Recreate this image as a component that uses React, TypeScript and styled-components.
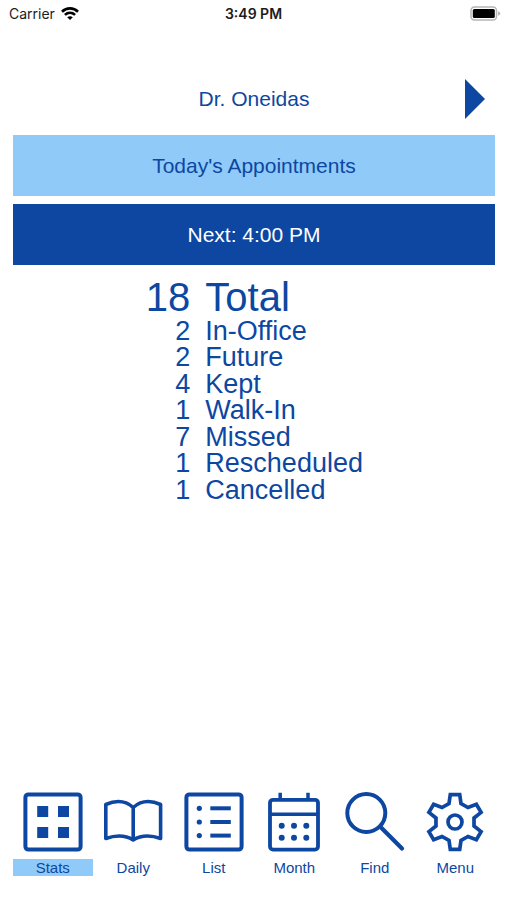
import React from "react";
import styled, { createGlobalStyle } from "styled-components";

const navy = "#0d47a1";
const sky = "#90caf9";

const GlobalStyle = createGlobalStyle`
  *, *::before, *::after { box-sizing: border-box; }
  body {
    margin: 0;
    background: #fff;
    color: ${navy};
    font-family: "Liberation Sans", Helvetica, Arial, sans-serif;
  }
`;

const Screen = styled.div`
  display: flex;
  flex-direction: column;
  min-height: 100vh;
`;

const StatusBar = styled.header`
  display: grid;
  grid-template-columns: 1fr auto 1fr;
  align-items: center;
  height: 27px;
  padding: 0 6px;
  color: #1c1c1c;
  font: 14px/20px Inter, sans-serif;
`;

const Carrier = styled.div`
  display: flex;
  align-items: center;
  gap: 6px;
  padding-left: 3px;
`;

const Clock = styled.time`
  font-weight: 600;
`;

const Battery = styled.div`
  display: flex;
  justify-content: flex-end;
`;

const Main = styled.main`
  display: flex;
  flex: 1;
  flex-direction: column;
  padding: 36px 12px 0 13px;
`;

const DoctorRow = styled.div`
  display: grid;
  grid-template-columns: 1fr auto 1fr;
  align-items: center;
  height: 72px;
  padding: 0 10px;
`;

const DoctorName = styled.h1`
  grid-column: 2;
  margin: 0;
  font-size: 21px;
  font-weight: 400;
  line-height: 26px;
`;

const NextButton = styled.button`
  display: flex;
  justify-self: end;
  padding: 0;
  border: 0;
  background: none;
  color: ${navy};
  cursor: pointer;
`;

const Panels = styled.div`
  display: grid;
  gap: 8px;
`;

const PanelButton = styled.button<{ $dark?: boolean }>`
  height: 61px;
  padding: 0 16px;
  border: 0;
  background: ${(p) => (p.$dark ? navy : sky)};
  color: ${(p) => (p.$dark ? "#fff" : navy)};
  font: inherit;
  font-size: 21px;
  line-height: 24px;
  cursor: pointer;
`;

const Summary = styled.table`
  width: 100%;
  margin-top: 12px;
  border-collapse: collapse;
  table-layout: fixed;
  font-size: 27px;
  line-height: 26px;
`;

const SummaryRow = styled.tr<{ $total?: boolean }>`
  font-size: ${(p) => (p.$total ? "40px" : "inherit")};
  line-height: ${(p) => (p.$total ? "40px" : "inherit")};
  &:nth-child(odd) > * { padding-bottom: 1px; }
`;

const Count = styled.td`
  width: 37%;
  padding: 0 1px 0 0;
  text-align: right;
`;

const Label = styled.th`
  padding: 0 0 0 14px;
  font-weight: 400;
  text-align: left;
`;

const TabBar = styled.nav`
  display: grid;
  grid-template-columns: repeat(6, 1fr);
  gap: 1px;
  padding: 0 12px 24px 13px;
`;

const Tab = styled.a`
  display: flex;
  flex-direction: column;
  align-items: center;
  gap: 7px;
  color: ${navy};
  text-decoration: none;
`;

const TabLabel = styled.span<{ $active?: boolean }>`
  align-self: stretch;
  background: ${(p) => (p.$active ? sky : "transparent")};
  font-size: 15px;
  line-height: 17px;
  text-align: center;
`;

const TabIcon = styled.svg.attrs({ viewBox: "0 0 60 60", "aria-hidden": true })`
  width: 60px;
  height: 60px;
  overflow: visible;
  fill: none;
  stroke: currentColor;
  stroke-width: 4;
  .solid { fill: currentColor; stroke: none; }
`;

const Frame = () => <rect x="2.4" y="2.4" width="55.2" height="55.2" rx="3" />;

const StatsIcon = () => (
  <TabIcon>
    <Frame />
    <path className="solid" d="M14.2 14h11v11h-11zM35 14h11v11h-11zM14.2 35h11v11h-11zM35 35h11v11h-11z" />
  </TabIcon>
);

const DailyIcon = () => (
  <TabIcon strokeLinejoin="round">
    <path
      d="M30.2 15.5C23 9 13 8 2.8 12.5V46.500C13 43 23 43.500 30.200 48C37.500 43.500 47.500 43 57.600 46.500V12.500C47.500 8 37.500 9 30.200 15.500ZV48"
      strokeWidth="3.600"
    />
  </TabIcon>
);

const ListIcon = () => (
  <TabIcon>
    <Frame />
    {[16.3, 30, 43.6].map((y) => (
      <g key={y}>
        <circle className="solid" cx="15.3" cy={y} r="2.600" />
        <path d={`M26.300 ${y}H46.800`} />
      </g>
    ))}
  </TabIcon>
);

const MonthIcon = () => (
  <TabIcon>
    <rect x="6" y="7.800" width="48" height="49.800" rx="3" strokeWidth="3.800" />
    <path d="M6 22.300H54M16.200 .8V8M44 .8V8" strokeWidth="3.500" />
    {[33.7, 45.7].map((y) =>
      [17.7, 30, 42.3].map((x) => (
        <circle key={`${x}-${y}`} className="solid" cx={x} cy={y} r="3" />
      ))
    )}
  </TabIcon>
);

const FindIcon = () => (
  <TabIcon strokeLinecap="round">
    <circle cx="21.300" cy="21" r="19" />
    <path d="M35.300 34.700L57 56.400" strokeWidth="4.200" />
  </TabIcon>
);

const tooth = [[-6, -18.5], [-4.7, -27.4], [4.7, -27.4], [6, -18.5]];
const gearPoints = [0, 60, 120, 180, 240, 300]
  .flatMap((deg) => {
    const a = (deg * Math.PI) / 180;
    return tooth.map(([x, y]) =>
      `${(30 + x * Math.cos(a) - y * Math.sin(a)).toFixed(2)},${(30 + x * Math.sin(a) + y * Math.cos(a)).toFixed(2)}`
    );
  })
  .join(" ");

const MenuIcon = () => (
  <TabIcon>
    <polygon points={gearPoints} strokeWidth="3.700" />
    <circle cx="30" cy="30" r="7" strokeWidth="3.700" />
  </TabIcon>
);

const rows = [
  { count: 18, label: "Total", total: true },
  { count: 2, label: "In-Office" },
  { count: 2, label: "Future" },
  { count: 4, label: "Kept" },
  { count: 1, label: "Walk-In" },
  { count: 7, label: "Missed" },
  { count: 1, label: "Rescheduled" },
  { count: 1, label: "Cancelled" },
];

const tabs = [
  { label: "Stats", Icon: StatsIcon, active: true },
  { label: "Daily", Icon: DailyIcon },
  { label: "List", Icon: ListIcon },
  { label: "Month", Icon: MonthIcon },
  { label: "Find", Icon: FindIcon },
  { label: "Menu", Icon: MenuIcon },
];

export default function App() {
  return (
    <>
      <GlobalStyle />
      <Screen>
        <StatusBar>
          <Carrier>
            Carrier
            <svg width="18" height="13" viewBox="0 0 18 13" fill="none" stroke="#000" strokeWidth="2.600" aria-hidden="true">
              <path d="M1 4.700C5.500 .3 12.500 .3 17 4.700M3.900 7.900C6.900 5.100 11.100 5.100 14.100 7.900" />
              <path d="M9 13L6.200 10.300Q9 8 11.800 10.300Z" fill="#000" stroke="none" />
            </svg>
          </Carrier>
          <Clock>3:49 PM</Clock>
          <Battery>
            <svg width="31" height="15" viewBox="0 0 31 15" role="img" aria-label="Battery full">
              <rect x="1" y="1" width="25.500" height="13" rx="3.500" fill="#fff" stroke="#b5b5b5" strokeWidth="1.500" />
              <rect x="2.800" y="3" width="22" height="9" rx="1.500" fill="#000" />
              <path d="M28 5.200Q30.300 6 30.300 7.500T28 9.800Z" fill="#b5b5b5" />
            </svg>
          </Battery>
        </StatusBar>
        <Main>
          <DoctorRow>
            <DoctorName>Dr. Oneidas</DoctorName>
            <NextButton type="button" aria-label="Next doctor">
              <svg width="20" height="40" viewBox="0 0 20 40" fill="currentColor" aria-hidden="true">
                <path d="M0 0L20 20L0 40Z" />
              </svg>
            </NextButton>
          </DoctorRow>
          <Panels>
            <PanelButton type="button">Today's Appointments</PanelButton>
            <PanelButton type="button" $dark>Next: 4:00 PM</PanelButton>
          </Panels>
          <Summary>
            <tbody>
              {rows.map((r) => (
                <SummaryRow key={r.label} $total={r.total}>
                  <Count>{r.count}</Count>
                  <Label scope="row">{r.label}</Label>
                </SummaryRow>
              ))}
            </tbody>
          </Summary>
        </Main>
        <TabBar aria-label="Sections">
          {tabs.map(({ label, Icon, active }) => (
            <Tab key={label} href={`#${label.toLowerCase()}`} aria-current={active ? "page" : undefined}>
              <Icon />
              <TabLabel $active={active}>{label}</TabLabel>
            </Tab>
          ))}
        </TabBar>
      </Screen>
    </>
  );
}
